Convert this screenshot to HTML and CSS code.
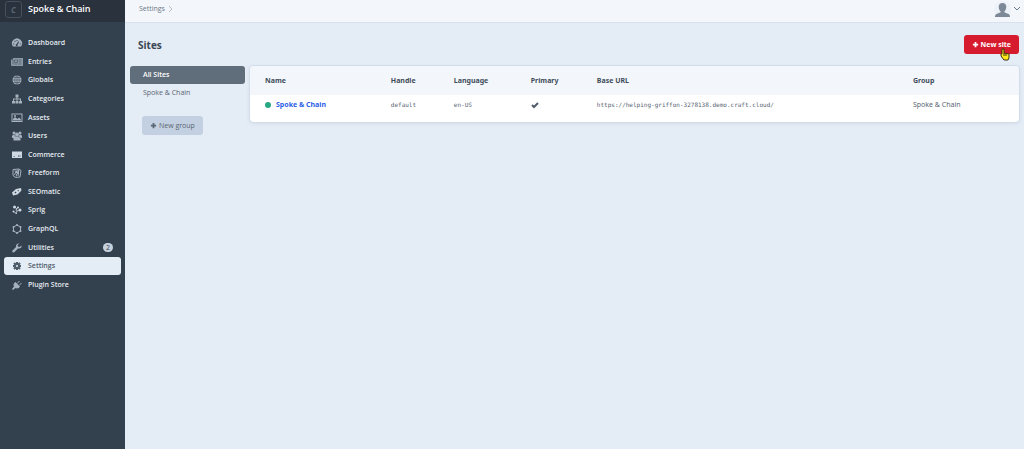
FILE: index.html
```html
<!DOCTYPE html>
<html lang="en">
<head>
<meta charset="utf-8">
<title>Sites - Spoke &amp; Chain</title>
<link rel="stylesheet" href="styles.css">
</head>
<body>
<div class="app">
  <aside class="sidebar">
    <a class="brand" href="#"><span class="brand-mark">C</span><span class="brand-name">Spoke &amp; Chain</span></a>
    <nav class="nav" aria-label="Primary">
      <a href="#"><svg viewBox="0 0 20 20"><path fill-rule="evenodd" d="M2 17A10 10 0 1 1 18 17ZM9 4v2h2V4ZM4.500 6.500l1.500 1.500 1.500-1.500L6 5ZM2.500 11v2h2v-2ZM15.500 11v2h2v-2ZM12.800 6.500l-4 6a2 2 0 1 0 2.400 1l3-6Z"/></svg><span>Dashboard</span></a>
      <a href="#"><svg viewBox="0 0 20 20"><path class="dim" d="M2 2h20v16H0a2 2 0 0 1-2-2V5h4Z"/><path class="cut" d="M2 5v10M5 6h6v5H5ZM13 6h6M13 10h6M5 14h6M13 14h6"/></svg><span>Entries</span></a>
      <a href="#"><svg viewBox="0 0 20 20"><circle cx="10" cy="10" r="9"/><path class="cut" d="M10 1v18M1 10h18M3 5h14M3 15h14M10 1c-6 5-6 13 0 18M10 1c6 5 6 13 0 18"/></svg><span>Globals</span></a>
      <a href="#"><svg viewBox="0 0 20 20"><path d="M7 1h6v6h-2v2h7v5h2v5h-6v-5h2v-3h-5v3h2v5H7v-5h2v-3H4v3h2v5H0v-5h2V9h7V7H7Z"/></svg><span>Categories</span></a>
      <a href="#"><svg viewBox="0 0 20 20"><path fill-rule="evenodd" d="M-1 1h22v17H-1ZM1 3v13h18V3ZM2 15v-3l4-4 5 4 3-3 4 4v2Z"/><circle cx="6" cy="6" r="2"/></svg><span>Assets</span></a>
      <a href="#"><svg viewBox="0 0 20 20"><circle cx="4" cy="4" r="3"/><circle cx="16" cy="4" r="3"/><circle cx="10" cy="7" r="4"/><path d="M0 13c-1-4 2-6 5-5l2 3-3 3H1ZM20 13c1-4-2-6-5-5l-2 3 3 3h3ZM3 19c-1-6 2-8 4-8h6c2 0 5 2 4 8Z"/></svg><span>Users</span></a>
      <a href="#"><svg viewBox="0 0 20 20"><path class="light" fill-rule="evenodd" d="M0 3h20v13H0ZM3 12v1h3v-1ZM12 11v2h2v-2ZM15 11v2h2v-2Z"/></svg><span>Commerce</span></a>
      <a href="#"><svg viewBox="0 0 20 20"><path class="line" d="M2 3l12-1 4 3-2 13-9 1-5-4ZM5 6l9 0M6 9l7-4M5 14l2-5 7 0M8 17l2-6 4 0M14 2l-2 14"/></svg><span>Freeform</span></a>
      <a href="#"><svg viewBox="0 0 20 20"><path class="light" fill-rule="evenodd" d="M0 11l8-7 10-2 1 5-8 8-9 2ZM5 11l2 2 2-2-2-2ZM11 7l1 2 2-2-1-1Z"/></svg><span>SEOmatic</span></a>
      <a href="#"><svg viewBox="0 0 20 20"><path class="sprig" d="M9 18c-1-4 0-7 6-7M9 18L4 13M5 4c5 2 5 5 3 8M8 9l4-4"/><circle class="light" cx="5" cy="4" r="3"/><circle class="light" cx="12" cy="5" r="2"/><circle class="light" cx="16" cy="10" r="3"/><circle class="light" cx="3" cy="13" r="2"/></svg><span>Sprig</span></a>
      <a href="#"><svg viewBox="0 0 20 20"><path class="line" d="M10 2l7 4v8l-7 4-7-4V6Z"/><circle cx="10" cy="2" r="2"/><circle cx="17" cy="6" r="2"/><circle cx="17" cy="14" r="2"/><circle cx="10" cy="18" r="2"/><circle cx="3" cy="14" r="2"/><circle cx="3" cy="6" r="2"/></svg><span>GraphQL</span></a>
      <a href="#"><svg viewBox="0 0 20 20"><path d="M19 5l-4 3-3-1-1-3 4-3c-4-1-8 2-7 7l-7 7c-2 3 1 5 4 3l7-7c5 1 8-2 7-6Z"/></svg><span>Utilities</span><b class="count">2</b></a>
      <a href="#" class="current" aria-current="page"><svg viewBox="0 0 20 20"><path class="gear-teeth" d="M10 2v4M10 14v4M2 10h4M14 10h4M4 4l3 3M13 13l3 3M16 4l-3 3M7 13l-3 3"/><circle class="gear" cx="10" cy="10" r="4"/></svg><span>Settings</span></a>
      <a href="#"><svg viewBox="0 0 20 20"><path d="M7 4l9 9c-2 4-6 5-9 3l-5 4-2-2 4-5C2 10 3 6 7 4Z"/><path class="prong" d="M10 7l5-5M14 11l5-5"/></svg><span>Plugin Store</span></a>
    </nav>
  </aside>

  <div class="page">
    <header class="topbar">
      <nav class="crumbs" aria-label="Breadcrumbs"><a href="#">Settings</a><svg viewBox="0 0 6 8"><path d="M1 1l3 3-3 3"/></svg></nav>
      <button class="account" aria-label="My Account">
        <span class="avatar"><svg viewBox="0 0 16 16"><path d="M8 1c3 0 4 2 4 4 0 3-1 4-2 5v1l5 2c1 1 1 2 1 3H0c0-1 0-2 1-3l5-2v-1C5 9 4 8 4 5c0-2 1-4 4-4Z"/></svg></span>
        <svg class="chevron" viewBox="0 0 8 6"><path d="M1 1l3 3 3-3"/></svg>
      </button>
    </header>

    <main class="main">
      <div class="heading">
        <h1>Sites</h1>
        <button class="btn submit"><svg class="plus" viewBox="0 0 8 8"><path d="M4 1v6M1 4h6"/></svg>New site
          <svg class="pointer" viewBox="0 0 10 13"><path d="M2 1h2v4l5 1v4l-1 2H4L1 8V6h1Z"/><path d="M4 5v3M6 6v2"/></svg>
        </button>
      </div>
      <div class="content">
        <div class="groups">
          <nav aria-label="Site groups">
            <a href="#" class="selected">All Sites</a>
            <a href="#">Spoke &amp; Chain</a>
          </nav>
          <button class="btn secondary"><svg class="plus" viewBox="0 0 8 8"><path d="M4 1v6M1 4h6"/></svg>New group</button>
        </div>
        <div class="card">
          <table>
            <thead>
              <tr><th class="c-name">Name</th><th class="c-handle">Handle</th><th class="c-lang">Language</th><th class="c-primary">Primary</th><th class="c-url">Base URL</th><th>Group</th></tr>
            </thead>
            <tbody>
              <tr>
                <td><a class="site" href="#"><i class="status"></i>Spoke &amp; Chain</a></td>
                <td><code>default</code></td>
                <td><code>en-US</code></td>
                <td><svg class="check" viewBox="0 0 8 8" role="img" aria-label="Yes"><path d="M1 4l2 2 4-4"/></svg></td>
                <td><code>https://helping-griffon-3278138.demo.craft.cloud/</code></td>
                <td>Spoke &amp; Chain</td>
              </tr>
            </tbody>
          </table>
        </div>
      </div>
    </main>
  </div>
</div>
</body>
</html>
```

FILE: styles.css
```css
* { box-sizing: border-box; }
body {
  margin: 0;
  font: 7px/10px "Open Sans", "Noto Sans", sans-serif;
  color: #596673;
  background: #e4ecf6;
}
a { color: inherit; text-decoration: none; }
button { font: inherit; border: 0; cursor: pointer; }
svg { display: block; flex: none; fill: none; }

.app { display: flex; min-height: 100vh; }

.sidebar { width: 125px; flex: none; background: #33404d; color: #e6ecf2; }
.brand {
  display: flex;
  align-items: center;
  gap: 6px;
  height: 22px;
  padding: 0 5px 4px;
  background: #29323d;
}
.brand-mark {
  width: 17px;
  height: 17px;
  border: 1px solid #46515d;
  border-radius: 3px;
  color: #596673;
  font: italic bold 8px/15px "Open Sans", sans-serif;
  text-align: center;
}
.brand-name { font-size: 9px; font-weight: 600; color: #fff; }

.nav {
  display: grid;
  grid-auto-rows: 1fr;
  height: 260px;
  margin: 12px 4px 0;
  font-weight: 600;
}
.nav a {
  display: flex;
  align-items: center;
  gap: 6px;
  padding: 0 8px;
  border-radius: 3px;
}
.nav svg { width: 10px; height: 10px; fill: #a5b1bd; overflow: visible; }
.nav svg .dim { fill: #8b98a5; }
.nav svg .cut { fill: none; stroke: #33404d; stroke-width: 1; }
.nav svg .light { fill: #ced8e2; }
.nav svg .line { fill: none; stroke: #a5b1bd; stroke-width: 2; }
.nav svg .sprig { fill: none; stroke: #ced8e2; stroke-width: 2; }
.nav svg .prong { stroke: #a5b1bd; stroke-width: 2; }
.nav svg .gear { fill: none; stroke: #4f5c69; stroke-width: 4; }
.nav svg .gear-teeth { stroke: #4f5c69; stroke-width: 4; }
.nav .current { background: #e4ecf6; color: #4f5c69; }
.count {
  margin-left: auto;
  width: 10px;
  height: 9px;
  border-radius: 5px;
  background: #c6d1de;
  color: #33404d;
  font-size: 7px;
  line-height: 9px;
  font-weight: 400;
  text-align: center;
}

.page { flex: 1; min-width: 0; }
.topbar {
  display: flex;
  justify-content: space-between;
  align-items: center;
  height: 23px;
  padding: 0 3px 4px 14px;
  background: #f3f7fc;
  border-bottom: 1px solid #d9e2ec;
}
.crumbs { display: flex; align-items: center; gap: 3px; color: #6b7885; }
.crumbs svg { width: 6px; height: 8px; stroke: #b4c0cc; }
.account { display: flex; align-items: center; gap: 2px; padding: 0; background: none; }
.avatar { width: 17px; height: 17px; border-radius: 50%; background: #edf2f8; }
.avatar svg { width: 15px; height: 15px; margin: 1px; fill: #7d8997; }
.chevron { width: 8px; height: 6px; stroke: #6b7885; }

.main { padding: 12px 5px 16px; }
.heading {
  display: flex;
  align-items: center;
  justify-content: space-between;
  padding-left: 8px;
  height: 19px;
}
h1 { margin: 0; font-size: 10px; line-height: 14px; font-weight: 700; color: #3a4653; }
.btn {
  position: relative;
  display: flex;
  align-items: center;
  gap: 2px;
  height: 19px;
  padding: 0 8px;
  border-radius: 3px;
}
.plus { width: 7px; height: 7px; stroke: currentColor; stroke-width: 2; }
.submit { background: #d61b2f; color: #fff; font-weight: 700; }
.pointer {
  position: absolute;
  right: 9px;
  bottom: -7px;
  width: 10px;
  height: 13px;
  fill: #ffe81a;
  stroke: #3b3511;
}
.secondary { margin: 14px 0 0 12px; background: #c3d0e1; color: #596673; }

.content { display: flex; align-items: flex-start; gap: 5px; margin-top: 12px; }
.groups { width: 115px; flex: none; }
.groups nav a { display: block; padding: 4px 13px; border-radius: 3px; line-height: 10px; }
.groups .selected { background: #606d7b; color: #fff; font-weight: 600; }

.card {
  flex: 1;
  min-width: 0;
  padding-bottom: 8px;
  overflow: hidden;
  background: #fff;
  border-radius: 4px;
  box-shadow: 0 0 0 1px #d3dde9, 0 1px 4px #cbd6e3;
}
table {
  width: 100%;
  table-layout: fixed;
  border-collapse: collapse;
  font-family: "Noto Sans", "Open Sans", sans-serif;
}
th, td { padding: 0 7px; text-align: left; white-space: nowrap; }
th:first-child, td:first-child { padding-left: 15px; }
th { height: 29px; background: #f3f7fc; color: #3f4d5a; font-weight: 700; }
td { height: 19px; }
.c-name { width: 17.4%; }
.c-handle { width: 8.2%; }
.c-lang { width: 10%; }
.c-primary { width: 8.6%; }
.c-url { width: 41.1%; }
.site { display: flex; align-items: center; gap: 5px; color: #2a5ee8; font-weight: 700; }
.status { width: 6px; height: 6px; border-radius: 50%; background: #27a883; }
code { font: 6px/10px "DejaVu Sans Mono", monospace; }
.check { width: 8px; height: 8px; stroke: #4f5c69; stroke-width: 2; }
```
